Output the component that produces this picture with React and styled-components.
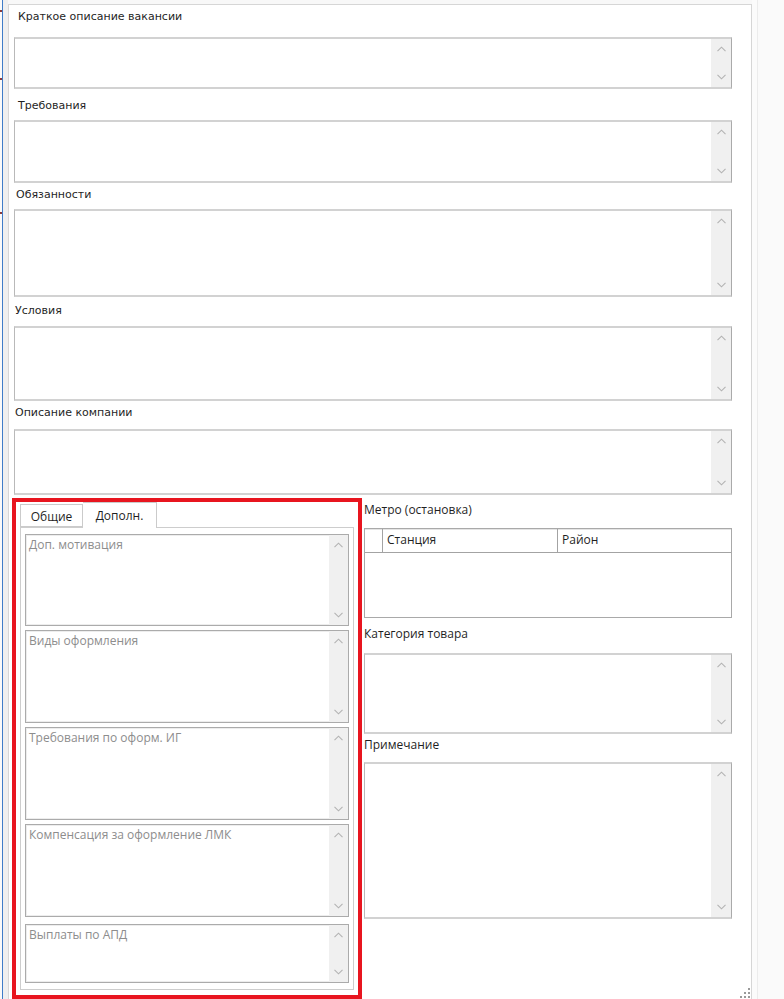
import React from 'react';
import styled, { createGlobalStyle } from 'styled-components';

const Global = createGlobalStyle`
  html, body { margin: 0; padding: 0; background: #f7f7f7; }
  body { width: 784px; height: 999px; overflow: hidden; font-family: "Open Sans", "Noto Sans", sans-serif; }
  * { box-sizing: border-box; }
`;

const Screen = styled.div`
  display: flex;
  width: 784px;
  height: 999px;
  overflow: hidden;
  background: #f8f8f8;
`;

const LeftGutter = styled.div`
  position: relative;
  width: 8px;
  flex: none;
  background: linear-gradient(to right, #fafafa 0 2px, #3f7cc8 2px 3px, #efefef 3px 8px);
`;

const Mark = styled.span`
  position: absolute;
  left: 0;
  width: 2px;
  height: 2px;
  background: #8a3a3a;
`;

const Panel = styled.div`
  position: relative;
  width: 744px;
  height: 995px;
  margin-top: 4px;
  flex: none;
  background: #fff;
  border: 1px solid #d6d6d6;
  border-bottom: none;
  display: flex;
  flex-direction: column;
`;

const RightGutter = styled.div`
  flex: 1;
  border-left: 5px solid #fbfbfb;
  background: linear-gradient(to right, #ececec 0 1px, #fafafa 1px);
`;

const TopFields = styled.div`
  display: flex;
  flex-direction: column;
  padding: 0 19px 0 5px;
`;

const Label = styled.div`
  height: ${p => p.$h}px;
  padding-top: ${p => p.$pt}px;
  padding-left: ${p => p.$indent || 0}px;
  font-family: ${p => (p.$tahoma ? '"DejaVu Sans", "Open Sans", sans-serif' : '"Open Sans", "Noto Sans", sans-serif')};
  font-size: ${p => (p.$tahoma ? '11px' : '12px')};
  line-height: 14px;
  color: #1f1f1f;
  white-space: nowrap;
`;

const Box = styled.div`
  display: flex;
  height: ${p => p.$h}px;
  background: #fff;
  border-left: 1px solid #b9b9b9;
  border-right: 1px solid #aaaaaa;
  border-top: 2px solid #d2d2d2;
  border-bottom: 2px solid #d2d2d2;
`;

const BoxBody = styled.div`
  flex: 1;
  padding: 3px 0 0 3px;
  font-size: 12px;
  line-height: 14px;
  color: #8f8f8f;
  white-space: nowrap;
  overflow: hidden;
`;

const Track = styled.div`
  width: ${p => p.$w || 20}px;
  flex: none;
  background: #f0f0f0;
  display: flex;
  flex-direction: column;
  justify-content: space-between;
  align-items: center;
  padding: 7px 0 7px;
`;

const Chevron = ({ down }) => (
  <svg width="9" height="6" viewBox="0 0 9 6">
    <path
      d={down ? 'M0.5 0.8 L4.5 4.8 L8.5 0.8' : 'M0.5 5.2 L4.5 1.2 L8.5 5.2'}
      fill="none"
      stroke="#b3b3b3"
      strokeWidth="1.1"
    />
  </svg>
);

const Scroll = ({ w }) => (
  <Track $w={w}>
    <Chevron />
    <Chevron down />
  </Track>
);

const TextBox = ({ h, children }) => (
  <Box $h={h}>
    <BoxBody>{children}</BoxBody>
    <Scroll />
  </Box>
);

const Bottom = styled.div`
  display: flex;
  gap: 2px;
  margin-top: 3px;
  padding-left: 3px;
`;

const RedFrame = styled.div`
  width: 350px;
  height: 501px;
  flex: none;
  border: 4px solid #e8151f;
  background: #fff;
  padding: 0 4px 5px 4px;
  display: flex;
  flex-direction: column;
`;

const TabStrip = styled.div`
  height: 25px;
  display: flex;
  align-items: flex-end;
  flex: none;
`;

const Tab = styled.div`
  position: relative;
  z-index: ${p => (p.$active ? 2 : 1)};
  height: ${p => (p.$active ? 26 : 23)}px;
  margin-bottom: ${p => (p.$active ? -1 : 0)}px;
  width: ${p => p.$w}px;
  border: 1px solid #cbcbcb;
  border-bottom: ${p => (p.$active ? 'none' : '1px solid #cbcbcb')};
  border-left: ${p => (p.$active ? 'none' : '1px solid #cbcbcb')};
  background: #fff;
  font-size: 12px;
  line-height: 14px;
  color: #1f1f1f;
  display: flex;
  justify-content: center;
  padding-top: ${p => (p.$active ? 6 : 5)}px;
`;

const TabPanel = styled.div`
  flex: 1;
  border: 1px solid #cdcdcd;
  padding: 6px 4px 6px 4px;
  display: flex;
  flex-direction: column;
  gap: 4px;
`;

const InnerBox = styled.div`
  display: flex;
  height: ${p => p.$h}px;
  margin-top: ${p => p.$mt || 0}px;
  flex: none;
  border: 1px solid #ababab;
  box-shadow: inset 0 0 0 1px #ededed;
  background: #fff;
`;

const InnerBody = styled.div`
  flex: 1;
  padding: 2px 0 0 3px;
  font-size: 12px;
  line-height: 16px;
  color: #8d8d8d;
  white-space: nowrap;
  overflow: hidden;
`;

const InnerField = ({ h, mt, children }) => (
  <InnerBox $h={h} $mt={mt}>
    <InnerBody>{children}</InnerBody>
    <Scroll w={19} />
  </InnerBox>
);

const RightCol = styled.div`
  width: 368px;
  flex: none;
  display: flex;
  flex-direction: column;
`;

const Table = styled.div`
  height: 90px;
  border: 1px solid #a9a9a9;
  box-shadow: inset 0 1px 0 #e4e4e4;
  background: #fff;
  display: flex;
  flex-direction: column;
`;

const HeadRow = styled.div`
  height: 24px;
  display: flex;
  border-bottom: 1px solid #a3a3a3;
`;

const HeadCell = styled.div`
  width: ${p => (p.$w ? `${p.$w}px` : 'auto')};
  flex: ${p => (p.$w ? 'none' : 1)};
  border-right: ${p => (p.$last ? 'none' : '1px solid #a3a3a3')};
  padding: 4px 0 0 4px;
  font-size: 12px;
  line-height: 14px;
  color: #1f1f1f;
`;

const Grip = styled.svg`
  position: absolute;
  right: 1px;
  bottom: 1px;
`;

export default function App() {
  return (
    <>
      <Global />
      <Screen>
        <LeftGutter>
          <Mark style={{ top: 10 }} />
          <Mark style={{ top: 78 }} />
          <Mark style={{ top: 212 }} />
        </LeftGutter>
        <Panel>
          <TopFields>
            <Label $h={32} $pt={5} $indent={4} $tahoma>Краткое описание вакансии</Label>
            <TextBox h={52} />
            <Label $h={31} $pt={10} $indent={4} $tahoma>Требования</Label>
            <TextBox h={63} />
            <Label $h={26} $pt={5} $indent={2} $tahoma>Обязанности</Label>
            <TextBox h={88} />
            <Label $h={29} $pt={7} $indent={1} $tahoma>Условия</Label>
            <TextBox h={75} />
            <Label $h={28} $pt={5} $indent={1} $tahoma>Описание компании</Label>
            <TextBox h={66} />
          </TopFields>
          <Bottom>
            <RedFrame>
              <TabStrip>
                <Tab $w={63}>Общие</Tab>
                <Tab $w={74} $active>Дополн.</Tab>
              </TabStrip>
              <TabPanel>
                <InnerField h={92}>Доп. мотивация</InnerField>
                <InnerField h={93}>Виды оформления</InnerField>
                <InnerField h={93}>Требования по оформ. ИГ</InnerField>
                <InnerField h={93}>Компенсация за оформление ЛМК</InnerField>
                <InnerField h={59} mt={3}>Выплаты по АПД</InnerField>
              </TabPanel>
            </RedFrame>
            <RightCol>
              <Label $h={30} $pt={5}>Метро (остановка)</Label>
              <Table>
                <HeadRow>
                  <HeadCell $w={18} />
                  <HeadCell $w={175}>Станция</HeadCell>
                  <HeadCell $last>Район</HeadCell>
                </HeadRow>
              </Table>
              <Label $h={35} $pt={9}>Категория товара</Label>
              <TextBox h={81} />
              <Label $h={28} $pt={4}>Примечание</Label>
              <TextBox h={157} />
            </RightCol>
          </Bottom>
          <Grip width="10" height="10" viewBox="0 0 10 10">
            <g fill="#9a9a9a">
              <rect x="8" y="0" width="2" height="2" />
              <rect x="8" y="4" width="2" height="2" />
              <rect x="8" y="8" width="2" height="2" />
              <rect x="4" y="4" width="2" height="2" />
              <rect x="4" y="8" width="2" height="2" />
              <rect x="0" y="8" width="2" height="2" />
            </g>
          </Grip>
        </Panel>
        <RightGutter />
      </Screen>
    </>
  );
}
